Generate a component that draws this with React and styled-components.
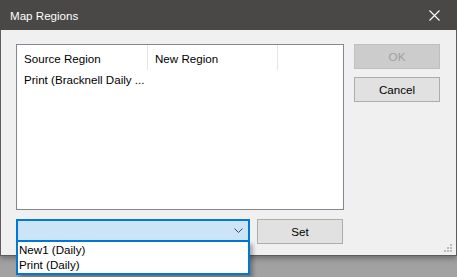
import React from "react";
import styled, { createGlobalStyle } from "styled-components";

const Global = createGlobalStyle`
  html, body { margin: 0; padding: 0; }
  body {
    width: 457px; height: 277px; overflow: hidden;
    background: linear-gradient(#8a8a8a, #a2a2a2);
    font-family: "Liberation Sans", Arial, sans-serif;
  }
`;

const Window = styled.div`
  position: relative;
  width: 457px;
  height: 256px;
  box-sizing: border-box;
  border: 1px solid #5c5c5c;
  border-top: none;
  display: flex;
  flex-direction: column;
  background: #f0f0f0;
  box-shadow: 0 2px 6px rgba(0,0,0,0.35);
`;

const TitleBar = styled.div`
  height: 30px;
  flex: none;
  background: #4a4846;
  display: flex;
  align-items: center;
  justify-content: space-between;
  padding: 0 0 0 10px;
  margin: 0 -1px;
  color: #ffffff;
  font-size: 11.6px;
  font-family: "Liberation Sans", Arial, sans-serif;
`;

const CloseBox = styled.div`
  width: 46px;
  height: 30px;
  display: flex;
  align-items: center;
  justify-content: center;
`;

const Body = styled.div`
  flex: 1;
  display: flex;
  flex-direction: column;
  padding: 14px 0 0 15px;
  gap: 9px;
  font-family: "Liberation Sans", Arial, sans-serif;
  font-size: 11.6px;
  color: #000;
`;

const TopRow = styled.div`
  display: flex;
  gap: 10px;
`;

const ListBox = styled.div`
  width: 328px;
  height: 166px;
  box-sizing: border-box;
  border: 1px solid #828790;
  background: #fff;
  display: flex;
  flex-direction: column;
`;

const HeaderRow = styled.div`
  display: flex;
  height: 25px;
  flex: none;
`;

const HeaderCell = styled.div`
  width: ${p => p.$w}px;
  box-sizing: border-box;
  padding-left: 7px;
  display: flex;
  align-items: center;
  border-right: 1px solid #e5e5e5;
  white-space: nowrap;
  padding-top: 1px;
`;

const DataRow = styled.div`
  display: flex;
  height: 19px;
  align-items: center;
  padding-left: 7px;
  white-space: nowrap;
`;

const ButtonCol = styled.div`
  display: flex;
  flex-direction: column;
  gap: 8px;
`;

const Button = styled.div`
  width: 86px;
  height: 25px;
  box-sizing: border-box;
  border: 1px solid ${p => (p.$disabled ? "#bfbfbf" : "#adadad")};
  background: ${p => (p.$disabled ? "#cccccc" : "#e1e1e1")};
  color: ${p => (p.$disabled ? "#a0a0a0" : "#000")};
  display: flex;
  align-items: center;
  justify-content: center;
`;

const BottomRow = styled.div`
  display: flex;
  gap: 7px;
  align-items: flex-start;
`;

const ComboWrap = styled.div`
  position: relative;
  width: 234px;
`;

const Combo = styled.div`
  height: 22px;
  box-sizing: border-box;
  border: 2px solid #0078d7;
  border-bottom-width: 1px;
  background: #cce4f7;
  display: flex;
  align-items: center;
  justify-content: flex-end;
  padding-right: 5px;
`;

const DropList = styled.div`
  position: absolute;
  left: 0;
  top: 22px;
  width: 234px;
  box-sizing: border-box;
  border: 2px solid #0078d7;
  border-top-width: 1px;
  background: #fff;
  box-shadow: 3px 3px 4px rgba(0,0,0,0.3);
  padding: 0 0 1px 0;
  z-index: 2;
`;

const DropItem = styled.div`
  height: 15px;
  line-height: 15px;
  padding-left: 1px;
  white-space: nowrap;
`;

const Grip = styled.svg`
  position: absolute;
  right: 3px;
  bottom: 2px;
`;

export default function App() {
  return (
    <>
      <Global />
      <Window>
        <TitleBar>
          <span>Map Regions</span>
          <CloseBox>
            <svg width="11" height="11" viewBox="0 0 11 11">
              <path d="M0.5 0.5 L10.5 10.5 M10.5 0.5 L0.5 10.5" stroke="#fff" strokeWidth="1.1" />
            </svg>
          </CloseBox>
        </TitleBar>
        <Body>
          <TopRow>
            <ListBox>
              <HeaderRow>
                <HeaderCell $w={131}>Source Region</HeaderCell>
                <HeaderCell $w={130}>New Region</HeaderCell>
              </HeaderRow>
              <DataRow>Print (Bracknell Daily ...</DataRow>
            </ListBox>
            <ButtonCol>
              <Button $disabled>OK</Button>
              <Button>Cancel</Button>
            </ButtonCol>
          </TopRow>
          <BottomRow>
            <ComboWrap>
              <Combo>
                <svg width="9" height="5" viewBox="0 0 9 5">
                  <path d="M0.5 0.5 L4.5 4.5 L8.5 0.5" stroke="#444" strokeWidth="1" fill="none" />
                </svg>
              </Combo>
              <DropList>
                <DropItem>New1 (Daily)</DropItem>
                <DropItem>Print (Daily)</DropItem>
              </DropList>
            </ComboWrap>
            <Button>Set</Button>
          </BottomRow>
        </Body>
        <Grip width="9" height="9" viewBox="0 0 9 9">
          <rect x="6" y="0" width="2" height="2" fill="#bdbdbd" />
          <rect x="3" y="3" width="2" height="2" fill="#bdbdbd" />
          <rect x="6" y="3" width="2" height="2" fill="#bdbdbd" />
          <rect x="0" y="6" width="2" height="2" fill="#bdbdbd" />
          <rect x="3" y="6" width="2" height="2" fill="#bdbdbd" />
          <rect x="6" y="6" width="2" height="2" fill="#bdbdbd" />
        </Grip>
      </Window>
    </>
  );
}
